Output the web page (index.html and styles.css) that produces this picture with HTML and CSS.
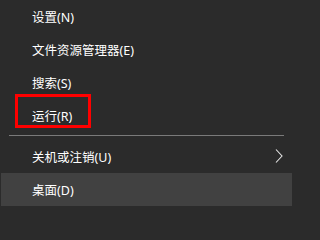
FILE: index.html
```html
<!DOCTYPE html>
<html lang="zh-CN">
<head>
<meta charset="utf-8">
<link rel="stylesheet" href="styles.css">
</head>
<body>
<div class="menu">
  <div class="item">设置(N)</div>
  <div class="item">文件资源管理器(E)</div>
  <div class="item">搜索(S)</div>
  <div class="item run">运行(R)<span class="mark"></span></div>
  <div class="sep"></div>
  <div class="item sub">关机或注销(U)
    <svg class="chev" width="8" height="14" viewBox="0 0 8 14"><polyline points="1,0.5 7,7 1,13.5" fill="none" stroke="#e6e6e6" stroke-width="1.1"/></svg>
  </div>
  <div class="item hover">桌面(D)</div>
</div>
</body>
</html>
```
FILE: styles.css
```css
html, body {
  margin: 0;
  padding: 0;
  background: #2b2b2b;
}
body {
  width: 294px;
  height: 213px;
  overflow: hidden;
  font-family: "Noto Sans", "Noto Sans CJK SC", sans-serif;
  font-size: 12.5px;
  color: #ffffff;
}
.menu {
  width: 291px;
  margin-left: 1px;
  display: flex;
  flex-direction: column;
}
.item {
  height: 33px;
  padding-left: 31px;
  padding-right: 10px;
  display: flex;
  align-items: center;
  position: relative;
}
.sep {
  height: 1px;
  margin: 3px 8px 4px 8px;
  background: #7a7a7a;
}
.hover {
  background: #414141;
}
.chev {
  position: absolute;
  right: 9px;
  top: 9px;
}
.mark {
  position: absolute;
  left: 14px;
  top: -5px;
  width: 70px;
  height: 28px;
  border: 3px solid #ff0000;
}
```
